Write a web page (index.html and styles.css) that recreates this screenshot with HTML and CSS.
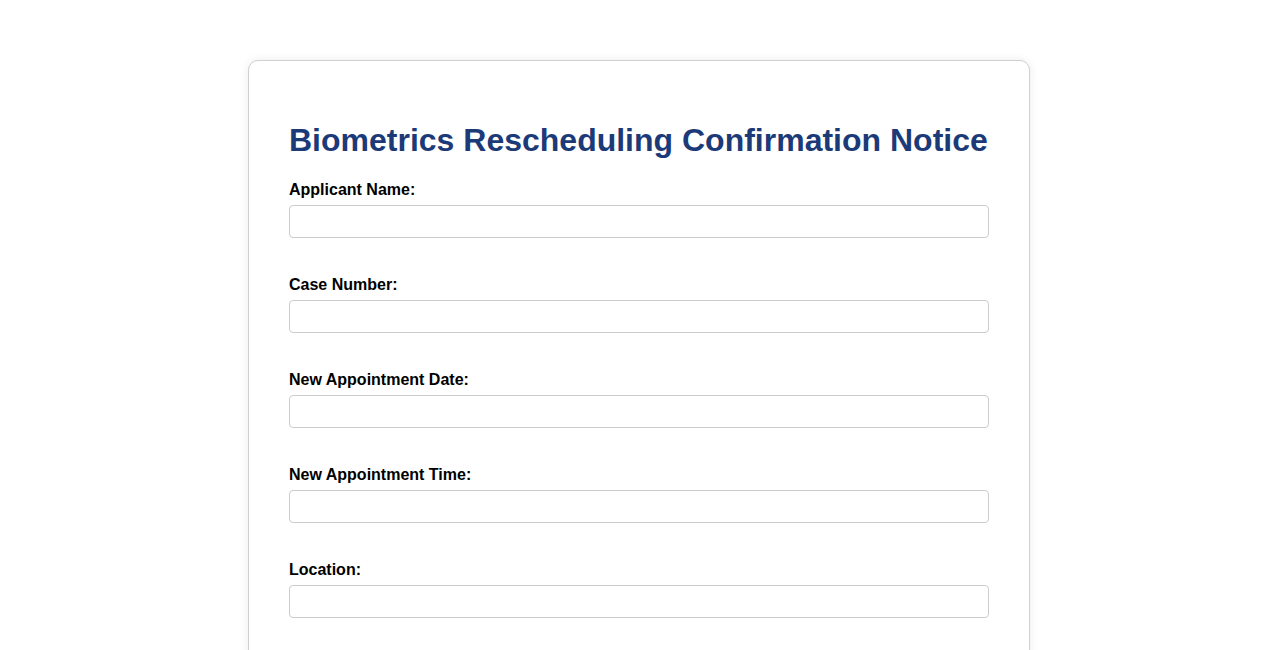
FILE: index.html
```html
<!DOCTYPE html>
<html lang="en">
<head>
<meta charset="utf-8">
<title>Biometrics Rescheduling Confirmation Notice</title>
<link rel="stylesheet" href="styles.css">
</head>
<body>
<div class="card">
  <h1 class="title">Biometrics Rescheduling Confirmation Notice</h1>
  <div class="field">
    <label class="label" for="name">Applicant Name:</label>
    <input class="input" id="name" type="text">
  </div>
  <div class="field">
    <label class="label" for="case">Case Number:</label>
    <input class="input" id="case" type="text">
  </div>
  <div class="field">
    <label class="label" for="date">New Appointment Date:</label>
    <input class="input" id="date" type="text">
  </div>
  <div class="field">
    <label class="label" for="time">New Appointment Time:</label>
    <input class="input" id="time" type="text">
  </div>
  <div class="field">
    <label class="label" for="loc">Location:</label>
    <input class="input" id="loc" type="text">
  </div>
</div>
</body>
</html>
```
FILE: styles.css
```css
html, body {
  margin: 0;
  padding: 0;
  background: #ffffff;
  font-family: "Liberation Sans", Arial, sans-serif;
}
body {
  padding-top: 60px;
}
.card {
  box-sizing: border-box;
  width: 782px;
  margin: 0 auto;
  padding: 40px;
  border: 1px solid #d0d0d0;
  border-radius: 10px;
  box-shadow: 0 0 10px rgba(0, 0, 0, 0.08);
  background: #fff;
}
.title {
  margin: 21px 0 22px;
  font-size: 32px;
  line-height: 37px;
  font-weight: bold;
  color: #1c3a78;
}
.field {
  display: flex;
  flex-direction: column;
  margin-bottom: 37px;
}
.field + .field {
  padding-top: 1px;
}
.label {
  font-size: 16px;
  line-height: 18px;
  font-weight: bold;
  color: #000;
  margin-bottom: 6px;
}
.input {
  box-sizing: border-box;
  width: 100%;
  height: 33px;
  margin: 0;
  padding: 8px;
  border: 1px solid #cccccc;
  border-radius: 4px;
  font-family: inherit;
  font-size: 16px;
  background: #fff;
}
```
